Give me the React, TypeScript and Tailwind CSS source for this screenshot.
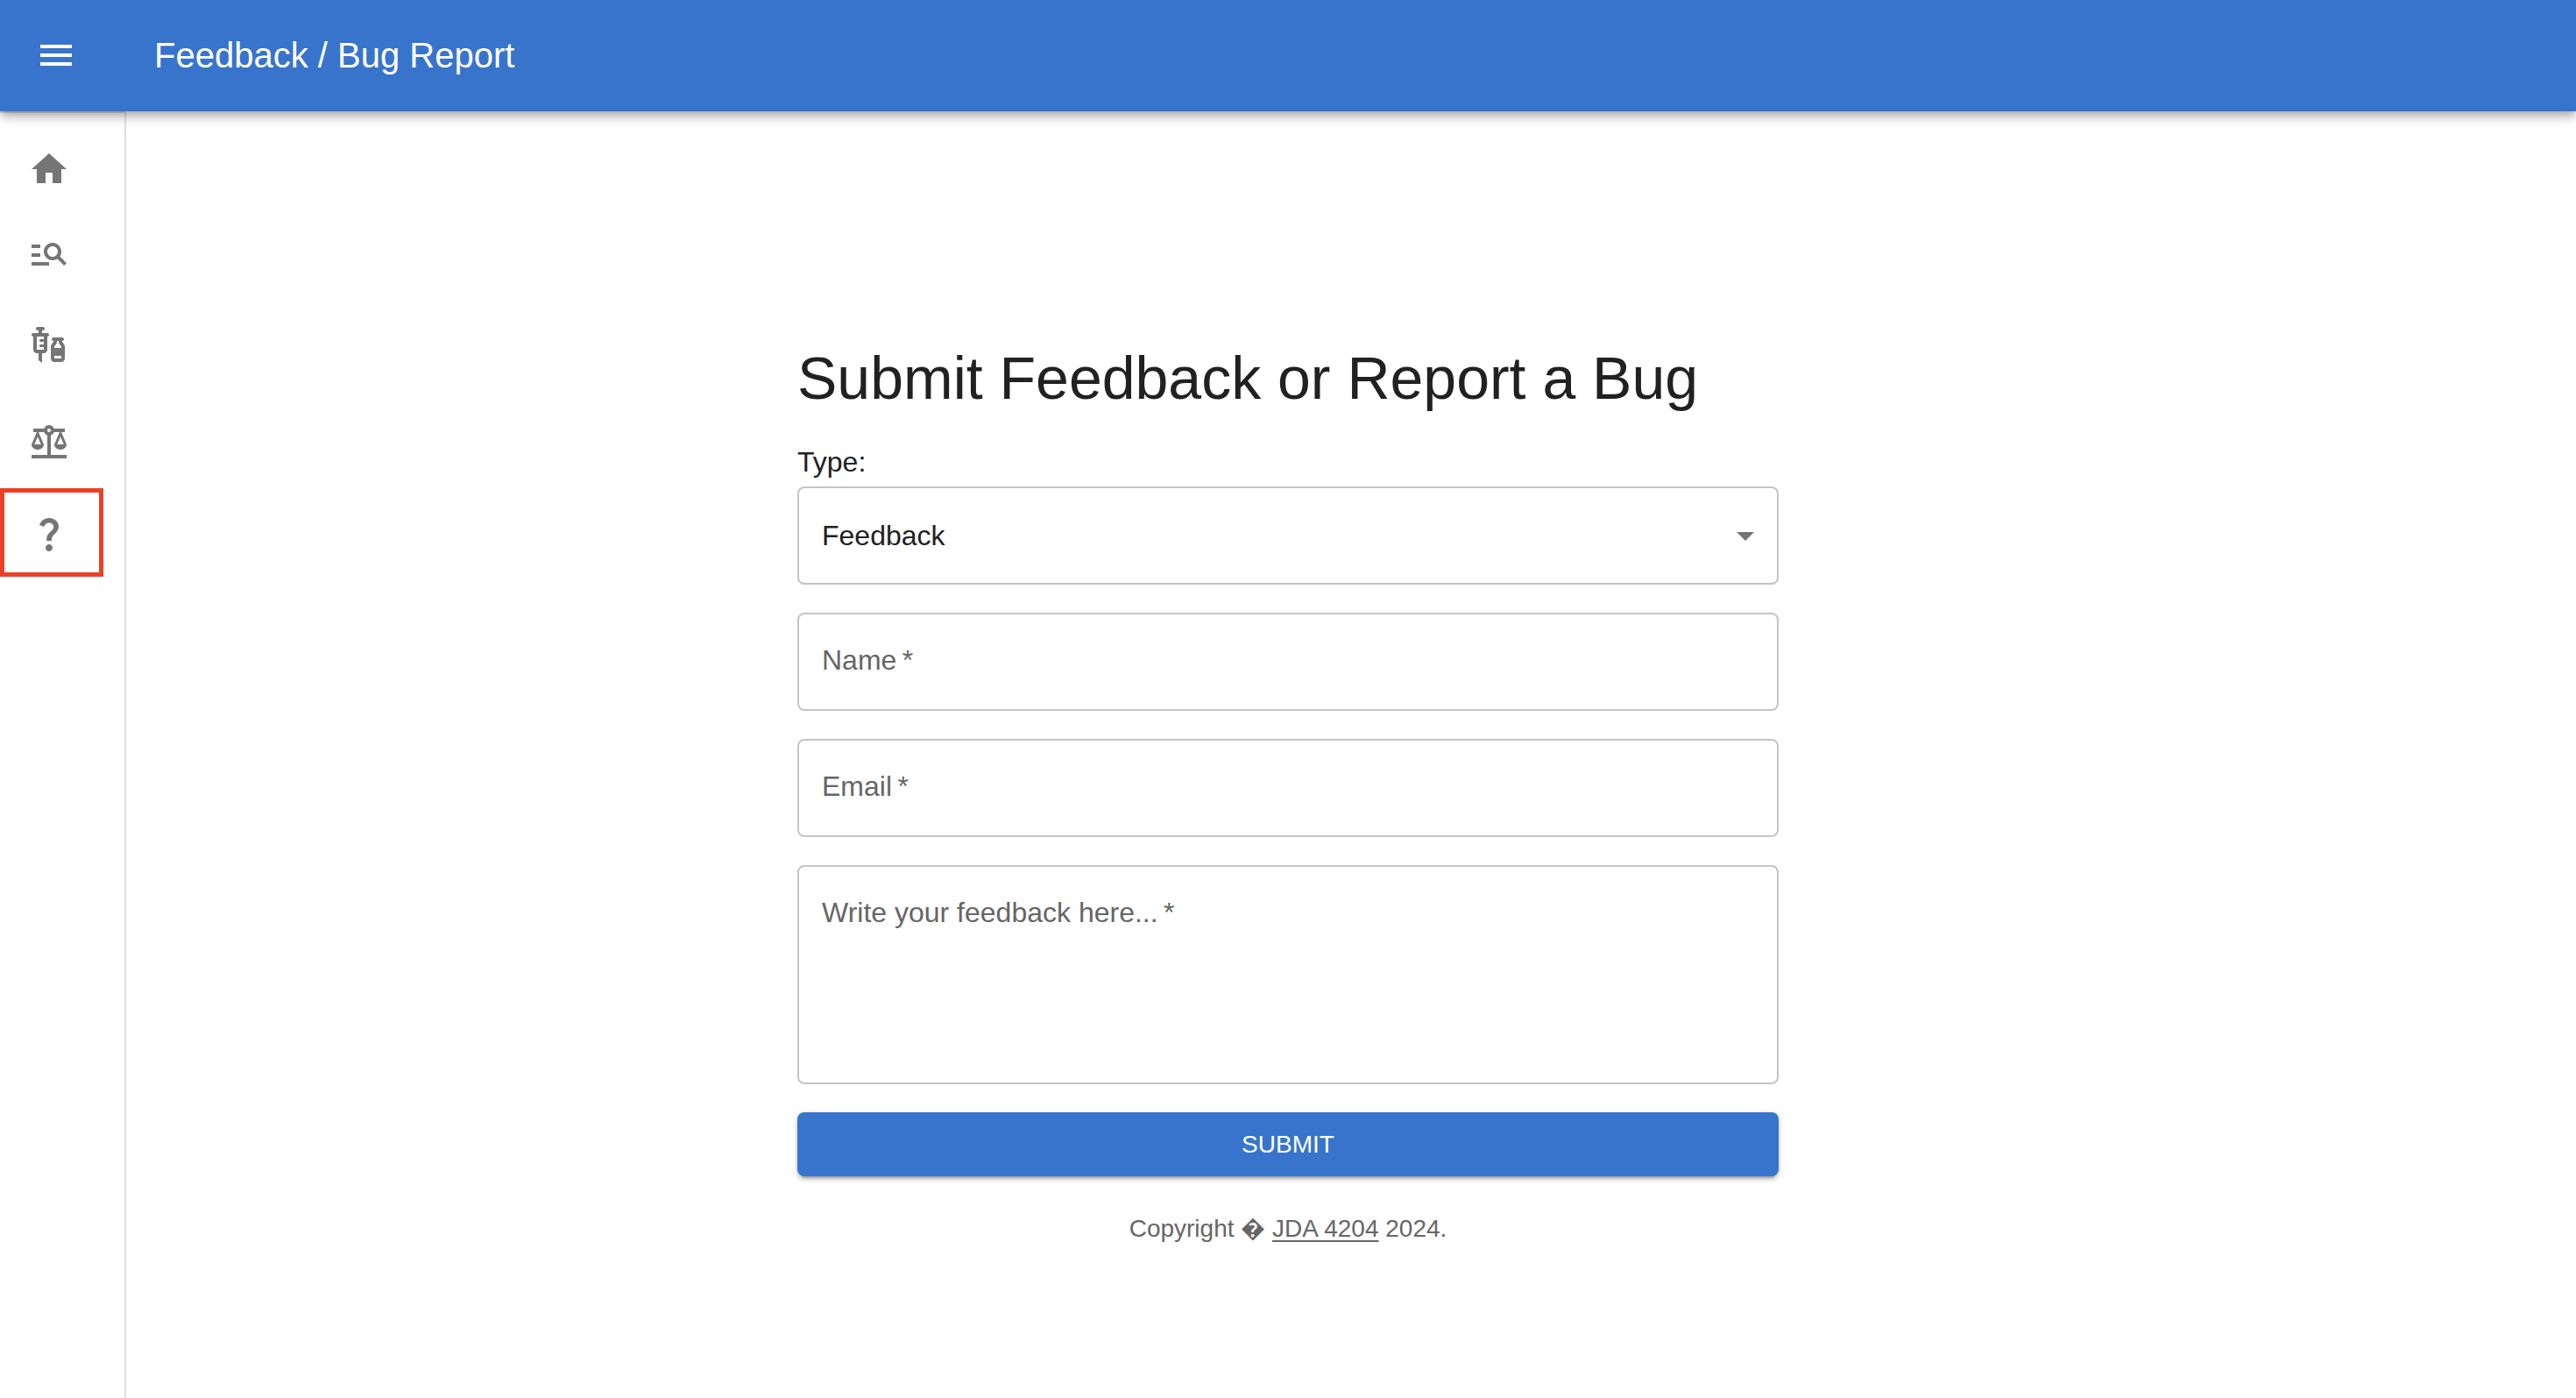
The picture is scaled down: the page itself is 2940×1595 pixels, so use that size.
import type { ReactNode } from "react";
import {
  MdArrowDropDown,
  MdBalance,
  MdHome,
  MdManageSearch,
  MdMenu,
  MdQuestionMark,
  MdVaccines,
} from "react-icons/md";

function TopBar() {
  return (
    <header className="relative z-10 flex h-[127px] items-center bg-[#3874cb] pb-0.5 pl-10 text-white shadow-[0_4px_8px_-2px_rgba(0,0,0,0.2),0_8px_10px_0_rgba(0,0,0,0.14),0_2px_20px_0_rgba(0,0,0,0.12)]">
      <button type="button" aria-label="Open menu" className="cursor-pointer">
        <MdMenu className="size-12" />
      </button>
      <p className="ml-[88px] text-[40px] leading-16">Feedback / Bug Report</p>
    </header>
  );
}

type NavItemProps = {
  label: string;
  icon: ReactNode;
  tall?: boolean;
  highlighted?: boolean;
};

function NavItem({ label, icon, tall = false, highlighted = false }: NavItemProps) {
  return (
    <li className="relative">
      <a
        href="#"
        aria-label={label}
        className={`flex items-center pl-8 text-[#757575] ${tall ? "h-28" : "h-24"}`}
      >
        {icon}
      </a>
      {highlighted && (
        <span className="pointer-events-none absolute -top-1 left-0 h-[101px] w-[118px] border-[5px] border-[#eb4026]" />
      )}
    </li>
  );
}

function Sidebar() {
  return (
    <nav className="w-36 shrink-0 border-t-2 border-r-2 border-[#e0e0e0] pt-4">
      <ul>
        <NavItem label="Home" icon={<MdHome className="size-12" />} />
        <NavItem label="Search" icon={<MdManageSearch className="size-12" />} />
        <NavItem label="Vaccines" icon={<MdVaccines className="size-12" />} tall />
        <NavItem label="Compare" icon={<MdBalance className="size-12" />} tall />
        <NavItem label="Feedback" icon={<MdQuestionMark className="size-12" />} highlighted />
      </ul>
    </nav>
  );
}

const fieldLabel =
  "pointer-events-none absolute top-[30px] left-7 text-[32px] leading-12 text-[#666666] peer-[:not(:placeholder-shown)]:hidden";

function TextField({ id, label, type }: { id: string; label: string; type: string }) {
  return (
    <div className="relative">
      <input
        id={id}
        type={type}
        required
        placeholder=" "
        className="peer block h-28 w-full rounded-lg border-2 border-[#c4c4c4] px-[26px] text-[32px] outline-none focus:border-[#3874cb]"
      />
      <label htmlFor={id} className={fieldLabel}>
        {label}&thinsp;*
      </label>
    </div>
  );
}

function FeedbackForm() {
  return (
    <form className="flex flex-col gap-8" onSubmit={(event) => event.preventDefault()}>
      <div>
        <label htmlFor="type" className="mb-1 block text-[32px] leading-12">
          Type:
        </label>
        <div className="relative">
          <select
            id="type"
            className="block h-28 w-full appearance-none rounded-lg border-2 border-[#c4c4c4] px-[26px] text-[32px] outline-none focus:border-[#3874cb]"
          >
            <option>Feedback</option>
            <option>Bug Report</option>
          </select>
          <MdArrowDropDown className="pointer-events-none absolute top-8 right-[14px] size-12 text-[#757575]" />
        </div>
      </div>
      <TextField id="name" label="Name" type="text" />
      <TextField id="email" label="Email" type="email" />
      <div className="relative">
        <textarea
          id="message"
          required
          placeholder=" "
          className="peer block h-[250px] w-full resize-none rounded-lg border-2 border-[#c4c4c4] px-[26px] py-7 text-[32px] leading-12 outline-none focus:border-[#3874cb]"
        />
        <label htmlFor="message" className={fieldLabel}>
          Write your feedback here...&thinsp;*
        </label>
      </div>
      <button
        type="submit"
        className="h-[73px] cursor-pointer rounded-lg bg-[#3874cb] text-[28px] text-white uppercase shadow-[0_6px_2px_-4px_rgba(0,0,0,0.2),0_4px_4px_0_rgba(0,0,0,0.14),0_2px_10px_0_rgba(0,0,0,0.12)]"
      >
        Submit
      </button>
    </form>
  );
}

export default function App() {
  return (
    <div className="flex min-h-screen flex-col bg-white font-['Liberation_Sans',Arial,sans-serif] text-[#212121]">
      <TopBar />
      <div className="flex flex-1">
        <Sidebar />
        <main className="flex flex-1 justify-center pt-[262px] pr-36 pb-10">
          <div className="w-full max-w-[1120px]">
            <h1 className="mb-[30px] text-[68px] leading-[84px]">Submit Feedback or Report a Bug</h1>
            <FeedbackForm />
            <p className="mt-10 text-center text-[28px] leading-10 text-[#666666]">
              Copyright �{" "}
              <a href="#" className="underline decoration-2 underline-offset-4">
                JDA 4204
              </a>{" "}
              2024.
            </p>
          </div>
        </main>
      </div>
    </div>
  );
}
